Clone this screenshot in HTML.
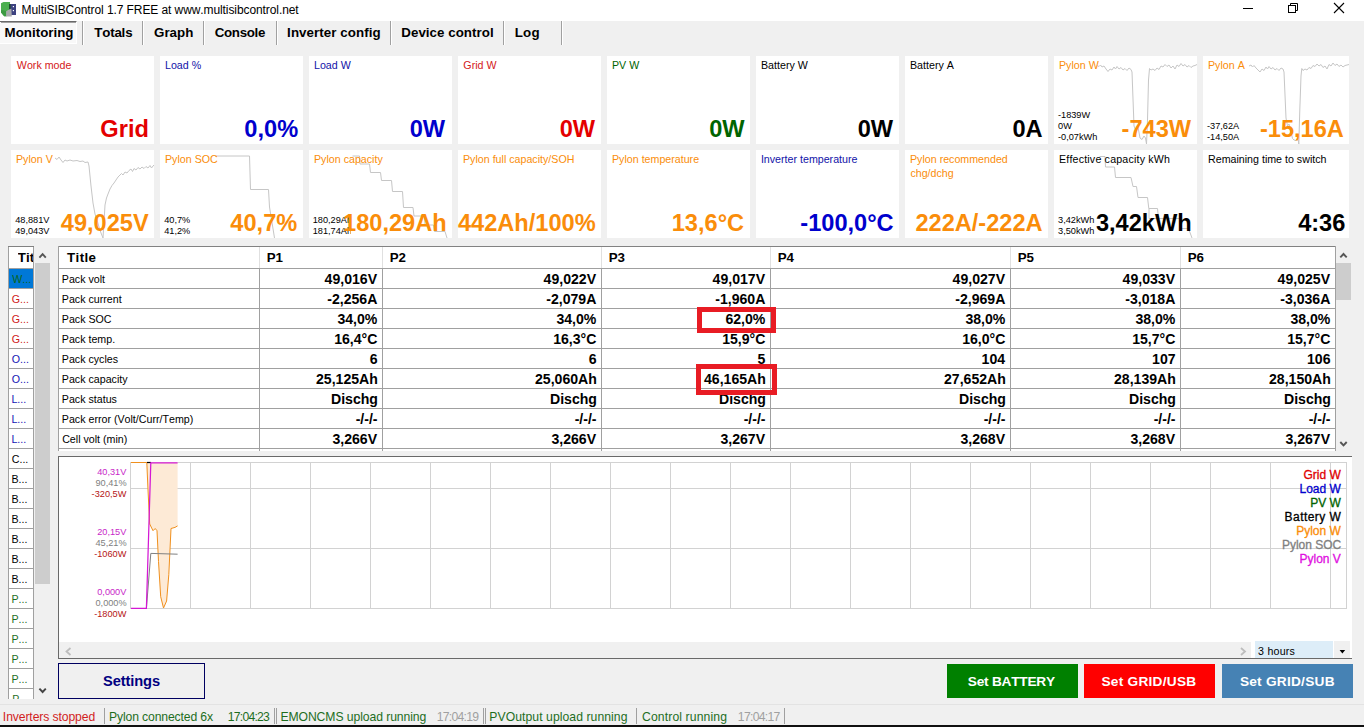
<!DOCTYPE html>
<html><head><meta charset="utf-8"><title>MultiSIBControl</title>
<style>
html,body{margin:0;padding:0;}
body{width:1364px;height:727px;overflow:hidden;background:#F0F0F0;position:relative;font-family:"Liberation Sans",sans-serif;}
.t{position:absolute;white-space:nowrap;line-height:30px;height:30px;font-kerning:none;}
.r{position:absolute;}
svg{position:absolute;left:0;top:0;overflow:visible;}
</style></head><body>
<div class="r" style="left:0px;top:0px;width:1364px;height:21px;background:#FFFFFF;"></div>
<svg width="22" height="21" viewBox="0 0 22 21">
<path d="M1 3.2 L3.5 2 L10 2 L10 9.5 L6.5 11.5 L6.5 16.2 L4.2 16.2 L1 12.6 Z" fill="#4CAF50"/>
<path d="M1 10 L6.5 11 L6.5 16.2 L4.2 16.2 L1 12.6 Z" fill="#3C9A42"/>
<rect x="9.3" y="4" width="6.7" height="11" fill="#3D4280"/>
<rect x="9" y="4" width="1.6" height="5" fill="#1F4D2A"/>
<path d="M6.2 16.6 L6.2 11.2 L11.4 8.6 L11.8 16.6 Z" fill="#A8A8AC"/>
<rect x="12.8" y="6" width="1.2" height="1.2" fill="#fff"/><rect x="12.8" y="10" width="1.2" height="1.2" fill="#fff"/>
</svg>
<div class="t" style="top:-5px;font-size:12px;color:#000;letter-spacing:-0.087px;left:21.62px;">MultiSIBControl 1.7 FREE at www.multisibcontrol.net</div>
<svg width="1364" height="21" viewBox="0 0 1364 21" shape-rendering="crispEdges">
<rect x="1243" y="8" width="10" height="1" fill="#000"/>
</svg>
<svg width="1364" height="21" viewBox="0 0 1364 21">
<rect x="1288.5" y="5.5" width="7" height="7" fill="none" stroke="#000" stroke-width="1"/>
<path d="M1290.5 5.5V3.5H1297.5V10.5H1295.5" fill="none" stroke="#000" stroke-width="1"/>
<path d="M1334 3L1344 13M1344 3L1334 13" fill="none" stroke="#000" stroke-width="1.1"/>
</svg>
<div class="r" style="left:0px;top:21px;width:77px;height:23px;background:#F8F8F8;border-top:1px solid #696969;border-right:1px solid #FFF;border-bottom:1px solid #FFF;box-sizing:border-box;"></div>
<div class="r" style="left:1px;top:22px;width:75px;height:1px;background:#A0A0A0;"></div>
<div class="t" style="top:18px;font-size:13.33px;color:#000;font-weight:bold;letter-spacing:0.004px;left:4.61px;">Monitoring</div>
<div class="t" style="top:18px;font-size:13.33px;color:#000;font-weight:bold;letter-spacing:-0.192px;left:94.25px;">Totals</div>
<div class="t" style="top:18px;font-size:13.33px;color:#000;font-weight:bold;letter-spacing:0.005px;left:154.05px;">Graph</div>
<div class="t" style="top:18px;font-size:13.33px;color:#000;font-weight:bold;letter-spacing:-0.297px;left:214.65px;">Console</div>
<div class="t" style="top:18px;font-size:13.33px;color:#000;font-weight:bold;letter-spacing:0.064px;left:287.11px;">Inverter config</div>
<div class="t" style="top:18px;font-size:13.33px;color:#000;font-weight:bold;letter-spacing:0.037px;left:401.31px;">Device control</div>
<div class="t" style="top:18px;font-size:13.33px;color:#000;font-weight:bold;letter-spacing:0.278px;left:514.71px;">Log</div>
<div class="r" style="left:82px;top:21px;width:1px;height:24px;background:#A0A0A0;"></div>
<div class="r" style="left:83px;top:21px;width:1px;height:24px;background:#FFFFFF;"></div>
<div class="r" style="left:142px;top:21px;width:1px;height:24px;background:#A0A0A0;"></div>
<div class="r" style="left:143px;top:21px;width:1px;height:24px;background:#FFFFFF;"></div>
<div class="r" style="left:203px;top:21px;width:1px;height:24px;background:#A0A0A0;"></div>
<div class="r" style="left:204px;top:21px;width:1px;height:24px;background:#FFFFFF;"></div>
<div class="r" style="left:276px;top:21px;width:1px;height:24px;background:#A0A0A0;"></div>
<div class="r" style="left:277px;top:21px;width:1px;height:24px;background:#FFFFFF;"></div>
<div class="r" style="left:390px;top:21px;width:1px;height:24px;background:#A0A0A0;"></div>
<div class="r" style="left:391px;top:21px;width:1px;height:24px;background:#FFFFFF;"></div>
<div class="r" style="left:503px;top:21px;width:1px;height:24px;background:#A0A0A0;"></div>
<div class="r" style="left:504px;top:21px;width:1px;height:24px;background:#FFFFFF;"></div>
<div class="r" style="left:561px;top:21px;width:1px;height:24px;background:#A0A0A0;"></div>
<div class="r" style="left:562px;top:21px;width:1px;height:24px;background:#FFFFFF;"></div>
<div class="r" style="left:11px;top:56px;width:143px;height:88px;background:#FFFFFF;"></div>
<div class="t" style="top:50px;font-size:10.67px;color:#D42020;left:16.85px;">Work mode</div>
<div class="t" style="top:114px;font-size:23.6px;color:#E40000;font-weight:bold;right:1215.14px;">Grid</div>
<div class="r" style="left:160px;top:56px;width:143px;height:88px;background:#FFFFFF;"></div>
<div class="t" style="top:50px;font-size:10.67px;color:#1212A8;left:165.02px;">Load %</div>
<div class="t" style="top:114px;font-size:23.6px;color:#0000CD;font-weight:bold;right:1065.88px;">0,0%</div>
<div class="r" style="left:309px;top:56px;width:143px;height:88px;background:#FFFFFF;"></div>
<div class="t" style="top:50px;font-size:10.67px;color:#1212A8;left:314.02px;">Load W</div>
<div class="t" style="top:114px;font-size:23.6px;color:#0000CD;font-weight:bold;right:918.98px;">0W</div>
<div class="r" style="left:458px;top:56px;width:143px;height:88px;background:#FFFFFF;"></div>
<div class="t" style="top:50px;font-size:10.67px;color:#D42020;left:463.36px;">Grid W</div>
<div class="t" style="top:114px;font-size:23.6px;color:#E40000;font-weight:bold;right:768.98px;">0W</div>
<div class="r" style="left:607px;top:56px;width:143px;height:88px;background:#FFFFFF;"></div>
<div class="t" style="top:50px;font-size:10.67px;color:#006400;left:612.02px;">PV W</div>
<div class="t" style="top:114px;font-size:23.6px;color:#006400;font-weight:bold;right:619.48px;">0W</div>
<div class="r" style="left:756px;top:56px;width:143px;height:88px;background:#FFFFFF;"></div>
<div class="t" style="top:50px;font-size:10.67px;color:#000000;left:761.02px;">Battery W</div>
<div class="t" style="top:114px;font-size:23.6px;color:#000000;font-weight:bold;right:470.98px;">0W</div>
<div class="r" style="left:905px;top:56px;width:143px;height:88px;background:#FFFFFF;"></div>
<div class="t" style="top:50px;font-size:10.67px;color:#000000;left:910.02px;">Battery A</div>
<div class="t" style="top:114px;font-size:23.6px;color:#000000;font-weight:bold;right:321.38px;">0A</div>
<div class="r" style="left:1054px;top:56px;width:143px;height:88px;background:#FFFFFF;"></div>
<div class="t" style="top:100px;font-size:9.2px;color:#000;left:1057.99px;">-1839W</div>
<div class="t" style="top:111px;font-size:9.2px;color:#000;left:1058.04px;">0W</div>
<div class="t" style="top:122px;font-size:9.2px;color:#000;left:1057.99px;">-0,07kWh</div>
<svg width="1364" height="727" viewBox="0 0 1364 727"><path d="M1097 65.5 L1099 66.5 L1100.5 65 L1102 67 L1104 66 L1106 69 L1108 71.5 L1110 69 L1112 70 L1114 67 L1115.5 69 L1117 66.5 L1119 69 L1121 67.5 L1123 70 L1125 68.5 L1127 70.5 L1129 68 L1131 69.5 L1132 72 L1134 126 L1136 131 L1138 127 L1140 138 L1142 139.5 L1144 136 L1145.5 138 L1146.5 144 L1147.5 120 L1148.5 80 L1149.5 68.5 L1151 70 L1153 69 L1155 70.5 L1157 68 L1159 69.5 L1161 66 L1163 67 L1165 64.5 L1167 66.5 L1169 65 L1171 68 L1173 66 L1175 69 L1177 65 L1179 66.5 L1181 63.5 L1183 66 L1185 64.5 L1187 67 L1189 65.5 L1191 67.5 L1193 66 L1195 65.5 L1197 64.5" fill="none" stroke="#C6C6C6" stroke-width="1"/></svg>
<div class="t" style="top:50px;font-size:10.67px;color:#FA8D0A;left:1059.02px;">Pylon W</div>
<div class="t" style="top:114px;font-size:23.6px;color:#FA8D0A;font-weight:bold;right:172.98px;">-743W</div>
<div class="r" style="left:1203px;top:56px;width:146px;height:88px;background:#FFFFFF;"></div>
<div class="t" style="top:111px;font-size:9.2px;color:#000;left:1206.99px;">-37,62A</div>
<div class="t" style="top:122px;font-size:9.2px;color:#000;left:1206.99px;">-14,50A</div>
<svg width="1364" height="727" viewBox="0 0 1364 727"><path d="M1249 66 L1251 65 L1252.5 67 L1254 65.5 L1256 68 L1258 70 L1260 72 L1262 69 L1264 70.5 L1266 67 L1267.5 69 L1269 66.5 L1271 69 L1273 67.5 L1275 70 L1277 68.5 L1279 70.5 L1281 68 L1283 69 L1284 72 L1286 118 L1287.5 126 L1289 124 L1291 132 L1292.5 138.5 L1294 140 L1296 140.5 L1298 138 L1298.8 144 L1299.8 110 L1301 76 L1301.8 68.5 L1303 70.5 L1305 69 L1307 70 L1309 67.5 L1311 68.5 L1313 65.5 L1315 66.5 L1317 64 L1319 66 L1321 64.5 L1323 67.5 L1325 66 L1327 69 L1329 64.5 L1331 66 L1333 63 L1335 65.5 L1337 64 L1339 66.5 L1341 65 L1343 67 L1345 65.5 L1347 65 L1349 64.5" fill="none" stroke="#C6C6C6" stroke-width="1"/></svg>
<div class="t" style="top:50px;font-size:10.67px;color:#FA8D0A;left:1208.02px;">Pylon A</div>
<div class="t" style="top:114px;font-size:23.6px;color:#FA8D0A;font-weight:bold;right:20.08px;">-15,16A</div>
<div class="r" style="left:11px;top:150px;width:143px;height:88px;background:#FFFFFF;"></div>
<div class="t" style="top:205px;font-size:9.2px;color:#000;left:15.19px;">48,881V</div>
<div class="t" style="top:216px;font-size:9.2px;color:#000;left:15.19px;">49,043V</div>
<svg width="1364" height="727" viewBox="0 0 1364 727"><path d="M55 158 L57 159.5 L59 157 L61 160 L63 162.5 L65 160 L67 161 L70 160 L73 161 L77 160.5 L80 161.5 L83 161 L85 162.5 L88 162 L89 166 L91 186 L93 203 L95 214 L97 220 L99 227 L101 233 L103 238 L104 222 L105 205 L106.5 198 L108 194 L110 189 L112 185.5 L114 183 L116 180 L118 177 L120 175 L121.5 173.5 L123 175 L125 172 L127 173 L129 170.5 L131 169 L132.5 171.5 L134 168.5 L136 170 L138 167.5 L140 169 L142 167 L144 168.5 L146 166.5 L148 168 L150 165.5 L151.5 168 L153 166 L154 165" fill="none" stroke="#C6C6C6" stroke-width="1"/></svg>
<div class="t" style="top:144px;font-size:10.67px;color:#FA8D0A;left:16.02px;">Pylon V</div>
<div class="t" style="top:208px;font-size:23.6px;color:#FA8D0A;font-weight:bold;right:1215.34px;">49,025V</div>
<div class="r" style="left:160px;top:150px;width:143px;height:88px;background:#FFFFFF;"></div>
<div class="t" style="top:205px;font-size:9.2px;color:#000;left:164.19px;">40,7%</div>
<div class="t" style="top:216px;font-size:9.2px;color:#000;left:164.19px;">41,2%</div>
<svg width="1364" height="727" viewBox="0 0 1364 727"><path d="M215.5 156 L249.5 156 L250.5 189.5 L268.5 189.5 L269.5 207 L274.5 238" fill="none" stroke="#C6C6C6" stroke-width="1"/></svg>
<div class="t" style="top:144px;font-size:10.67px;color:#FA8D0A;left:165.02px;">Pylon SOC</div>
<div class="t" style="top:208px;font-size:23.6px;color:#FA8D0A;font-weight:bold;right:1066.78px;">40,7%</div>
<div class="r" style="left:309px;top:150px;width:143px;height:88px;background:#FFFFFF;"></div>
<div class="t" style="top:205px;font-size:9.2px;color:#000;left:312.70px;">180,29Ah</div>
<div class="t" style="top:216px;font-size:9.2px;color:#000;left:312.70px;">181,74Ah</div>
<div class="r" style="left:350.5px;top:208px;width:101.5px;height:30px;background:#FFF;"></div>
<svg width="1364" height="727" viewBox="0 0 1364 727"><path d="M352.5 156 L359.5 156 L360 164 L369.5 164 L370.5 172.5 L380.5 172.5 L381.5 180.5 L391.5 180.5 L392.5 191.5 L402.5 191.5 L403.5 207.5 L413 207.5 L414 216 L424.5 216 L425 225 L433.5 225 L434.5 231.5 L445 231.5 L447 238" fill="none" stroke="#C6C6C6" stroke-width="1"/></svg>
<div class="t" style="top:144px;font-size:10.67px;color:#FA8D0A;left:314.02px;">Pylon capacity</div>
<div class="t" style="top:208px;font-size:23.6px;color:#FA8D0A;font-weight:bold;right:917.34px;">180,29Ah</div>
<div class="r" style="left:458px;top:150px;width:143px;height:88px;background:#FFFFFF;"></div>
<div class="t" style="top:144px;font-size:10.67px;color:#FA8D0A;left:463.02px;">Pylon full capacity/SOH</div>
<div class="t" style="top:208px;font-size:23.6px;color:#FA8D0A;font-weight:bold;right:768.38px;">442Ah/100%</div>
<div class="r" style="left:607px;top:150px;width:143px;height:88px;background:#FFFFFF;"></div>
<div class="t" style="top:144px;font-size:10.67px;color:#FA8D0A;left:612.02px;">Pylon temperature</div>
<div class="t" style="top:208px;font-size:23.6px;color:#FA8D0A;font-weight:bold;right:619.85px;">13,6°C</div>
<div class="r" style="left:756px;top:150px;width:143px;height:88px;background:#FFFFFF;"></div>
<div class="t" style="top:144px;font-size:10.67px;color:#1212A8;left:760.92px;">Inverter temperature</div>
<div class="t" style="top:208px;font-size:23.6px;color:#0000CD;font-weight:bold;right:470.35px;">-100,0°C</div>
<div class="r" style="left:905px;top:150px;width:143px;height:88px;background:#FFFFFF;"></div>
<div class="t" style="top:144px;font-size:10.67px;color:#FA8D0A;left:910.02px;">Pylon recommended</div>
<div class="t" style="top:158px;font-size:10.67px;color:#FA8D0A;left:910.45px;">chg/dchg</div>
<div class="t" style="top:208px;font-size:23.6px;color:#FA8D0A;font-weight:bold;right:321.38px;">222A/-222A</div>
<div class="r" style="left:1054px;top:150px;width:143px;height:88px;background:#FFFFFF;"></div>
<div class="t" style="top:205px;font-size:9.2px;color:#000;left:1058.05px;">3,42kWh</div>
<div class="t" style="top:216px;font-size:9.2px;color:#000;left:1058.05px;">3,50kWh</div>
<div class="r" style="left:1095px;top:208px;width:102px;height:30px;background:#FFF;"></div>
<svg width="1364" height="727" viewBox="0 0 1364 727"><path d="M1099.5 156.5 L1105 156.5 L1105.5 167 L1114.5 167 L1115.5 177.5 L1131 177.5 L1133 186.5 L1136.5 186.5 L1138 197.5 L1147.5 197.5 L1148.8 208.5 L1157.5 208.5 L1158.5 218.5 L1149 218.5 L1149 208.5 M1158.5 218.5 L1180.5 218.5 L1181 228.5 L1188.5 228.5 L1192 238" fill="none" stroke="#C6C6C6" stroke-width="1"/></svg>
<div class="t" style="top:144px;font-size:10.67px;color:#000000;letter-spacing:0.178px;left:1059.02px;">Effective capacity kWh</div>
<div class="t" style="top:208px;font-size:23.6px;color:#000000;font-weight:bold;right:172.34px;">3,42kWh</div>
<div class="r" style="left:1203px;top:150px;width:146px;height:88px;background:#FFFFFF;"></div>
<div class="t" style="top:144px;font-size:10.67px;color:#000000;left:1208.02px;">Remaining time to switch</div>
<div class="t" style="top:208px;font-size:23.6px;color:#000000;font-weight:bold;right:18.65px;">4:36</div>
<div class="r" style="left:8px;top:246px;width:26px;height:453px;background:#FFFFFF;border:1px solid #A0A0A0;border-bottom:none;box-sizing:border-box;"></div>
<div class="r" style="left:8px;top:246px;width:26px;height:1px;background:#828282;"></div>
<div class="t" style="top:243px;font-size:13.33px;color:#000;font-weight:bold;left:17.85px;width:14.8px;overflow:hidden;">Tit</div>
<div class="r" style="left:9px;top:268px;width:24px;height:1px;background:#A0A0A0;"></div>
<div class="r" style="left:9px;top:269px;width:24px;height:19px;background:#0078D7;"></div>
<div class="t" style="top:264px;font-size:10.67px;color:#0A6420;left:12.25px;">W...</div>
<div class="r" style="left:9px;top:288px;width:24px;height:1px;background:#A0A0A0;"></div>
<div class="t" style="top:284px;font-size:10.67px;color:#D02020;left:11.76px;">G...</div>
<div class="r" style="left:9px;top:308px;width:24px;height:1px;background:#A0A0A0;"></div>
<div class="t" style="top:304px;font-size:10.67px;color:#D02020;left:11.76px;">G...</div>
<div class="r" style="left:9px;top:328px;width:24px;height:1px;background:#A0A0A0;"></div>
<div class="t" style="top:324px;font-size:10.67px;color:#D02020;left:11.76px;">G...</div>
<div class="r" style="left:9px;top:348px;width:24px;height:1px;background:#A0A0A0;"></div>
<div class="t" style="top:344px;font-size:10.67px;color:#1414B4;left:11.79px;">O...</div>
<div class="r" style="left:9px;top:368px;width:24px;height:1px;background:#A0A0A0;"></div>
<div class="t" style="top:364px;font-size:10.67px;color:#1414B4;left:11.79px;">O...</div>
<div class="r" style="left:9px;top:388px;width:24px;height:1px;background:#A0A0A0;"></div>
<div class="t" style="top:384px;font-size:10.67px;color:#1414B4;left:11.42px;">L...</div>
<div class="r" style="left:9px;top:408px;width:24px;height:1px;background:#A0A0A0;"></div>
<div class="t" style="top:404px;font-size:10.67px;color:#1414B4;left:11.42px;">L...</div>
<div class="r" style="left:9px;top:428px;width:24px;height:1px;background:#A0A0A0;"></div>
<div class="t" style="top:424px;font-size:10.67px;color:#1414B4;left:11.42px;">L...</div>
<div class="r" style="left:9px;top:448px;width:24px;height:1px;background:#A0A0A0;"></div>
<div class="t" style="top:444px;font-size:10.67px;color:#000;left:11.76px;">C...</div>
<div class="r" style="left:9px;top:468px;width:24px;height:1px;background:#A0A0A0;"></div>
<div class="t" style="top:464px;font-size:10.67px;color:#000;left:11.42px;">B...</div>
<div class="r" style="left:9px;top:488px;width:24px;height:1px;background:#A0A0A0;"></div>
<div class="t" style="top:484px;font-size:10.67px;color:#000;left:11.42px;">B...</div>
<div class="r" style="left:9px;top:508px;width:24px;height:1px;background:#A0A0A0;"></div>
<div class="t" style="top:504px;font-size:10.67px;color:#000;left:11.42px;">B...</div>
<div class="r" style="left:9px;top:528px;width:24px;height:1px;background:#A0A0A0;"></div>
<div class="t" style="top:524px;font-size:10.67px;color:#000;left:11.42px;">B...</div>
<div class="r" style="left:9px;top:548px;width:24px;height:1px;background:#A0A0A0;"></div>
<div class="t" style="top:544px;font-size:10.67px;color:#000;left:11.42px;">B...</div>
<div class="r" style="left:9px;top:568px;width:24px;height:1px;background:#A0A0A0;"></div>
<div class="t" style="top:564px;font-size:10.67px;color:#000;left:11.42px;">B...</div>
<div class="r" style="left:9px;top:588px;width:24px;height:1px;background:#A0A0A0;"></div>
<div class="t" style="top:584px;font-size:10.67px;color:#1E6E1E;left:11.42px;">P...</div>
<div class="r" style="left:9px;top:608px;width:24px;height:1px;background:#A0A0A0;"></div>
<div class="t" style="top:604px;font-size:10.67px;color:#1E6E1E;left:11.42px;">P...</div>
<div class="r" style="left:9px;top:628px;width:24px;height:1px;background:#A0A0A0;"></div>
<div class="t" style="top:624px;font-size:10.67px;color:#1E6E1E;left:11.42px;">P...</div>
<div class="r" style="left:9px;top:648px;width:24px;height:1px;background:#A0A0A0;"></div>
<div class="t" style="top:644px;font-size:10.67px;color:#1E6E1E;left:11.42px;">P...</div>
<div class="r" style="left:9px;top:668px;width:24px;height:1px;background:#A0A0A0;"></div>
<div class="t" style="top:664px;font-size:10.67px;color:#1E6E1E;left:11.42px;">P...</div>
<div class="r" style="left:9px;top:688px;width:24px;height:1px;background:#A0A0A0;"></div>
<div class="r" style="left:9px;top:689px;width:24px;height:10px;overflow:hidden;"><div class="t" style="left:3.3px;top:-5px;font-size:10.67px;color:#1E6E1E">P...</div></div>
<div class="r" style="left:34px;top:246px;width:17px;height:453px;background:#F0F0F0;"></div>
<div class="r" style="left:35px;top:263px;width:15px;height:321px;background:#CDCDCD;"></div>
<svg width="1364" height="727" viewBox="0 0 1364 727"><path d="M39.4 257.6 L42.6 254.2 L45.8 257.6" fill="none" stroke="#555" stroke-width="1.9"/><path d="M39.4 688.6 L42.6 692 L45.8 688.6" fill="none" stroke="#444" stroke-width="1.9"/></svg>
<div class="r" style="left:58px;top:246px;width:1278px;height:205px;background:#FFFFFF;"></div>
<div class="r" style="left:58px;top:246px;width:1278px;height:1px;background:#828282;"></div>
<div class="r" style="left:58px;top:246px;width:1px;height:205px;background:#A0A0A0;"></div>
<div class="r" style="left:1335px;top:246px;width:1px;height:205px;background:#A0A0A0;"></div>
<div class="r" style="left:259px;top:247px;width:1px;height:21px;background:#E0E0E0;"></div>
<div class="r" style="left:259px;top:268px;width:1px;height:183px;background:#A0A0A0;"></div>
<div class="r" style="left:382px;top:247px;width:1px;height:21px;background:#E0E0E0;"></div>
<div class="r" style="left:382px;top:268px;width:1px;height:183px;background:#A0A0A0;"></div>
<div class="r" style="left:601px;top:247px;width:1px;height:21px;background:#E0E0E0;"></div>
<div class="r" style="left:601px;top:268px;width:1px;height:183px;background:#A0A0A0;"></div>
<div class="r" style="left:770px;top:247px;width:1px;height:21px;background:#E0E0E0;"></div>
<div class="r" style="left:770px;top:268px;width:1px;height:183px;background:#A0A0A0;"></div>
<div class="r" style="left:1010px;top:247px;width:1px;height:21px;background:#E0E0E0;"></div>
<div class="r" style="left:1010px;top:268px;width:1px;height:183px;background:#A0A0A0;"></div>
<div class="r" style="left:1180px;top:247px;width:1px;height:21px;background:#E0E0E0;"></div>
<div class="r" style="left:1180px;top:268px;width:1px;height:183px;background:#A0A0A0;"></div>
<div class="r" style="left:58px;top:268px;width:1278px;height:1px;background:#A0A0A0;"></div>
<div class="r" style="left:58px;top:288px;width:1278px;height:1px;background:#A0A0A0;"></div>
<div class="r" style="left:58px;top:308px;width:1278px;height:1px;background:#A0A0A0;"></div>
<div class="r" style="left:58px;top:328px;width:1278px;height:1px;background:#A0A0A0;"></div>
<div class="r" style="left:58px;top:348px;width:1278px;height:1px;background:#A0A0A0;"></div>
<div class="r" style="left:58px;top:368px;width:1278px;height:1px;background:#A0A0A0;"></div>
<div class="r" style="left:58px;top:388px;width:1278px;height:1px;background:#A0A0A0;"></div>
<div class="r" style="left:58px;top:408px;width:1278px;height:1px;background:#A0A0A0;"></div>
<div class="r" style="left:58px;top:428px;width:1278px;height:1px;background:#A0A0A0;"></div>
<div class="r" style="left:58px;top:448px;width:1278px;height:1px;background:#A0A0A0;"></div>
<div class="t" style="top:243px;font-size:13.33px;color:#000;font-weight:bold;letter-spacing:0.376px;left:67.05px;">Title</div>
<div class="t" style="top:243px;font-size:13.33px;color:#000;font-weight:bold;left:266.71px;">P1</div>
<div class="t" style="top:243px;font-size:13.33px;color:#000;font-weight:bold;left:389.71px;">P2</div>
<div class="t" style="top:243px;font-size:13.33px;color:#000;font-weight:bold;left:608.71px;">P3</div>
<div class="t" style="top:243px;font-size:13.33px;color:#000;font-weight:bold;left:777.71px;">P4</div>
<div class="t" style="top:243px;font-size:13.33px;color:#000;font-weight:bold;left:1017.71px;">P5</div>
<div class="t" style="top:243px;font-size:13.33px;color:#000;font-weight:bold;left:1187.71px;">P6</div>
<div class="t" style="top:264px;font-size:10.67px;color:#000;left:61.82px;">Pack volt</div>
<div class="t" style="top:264px;font-size:14.1px;color:#000;font-weight:bold;right:986.90px;">49,016V</div>
<div class="t" style="top:264px;font-size:14.1px;color:#000;font-weight:bold;right:767.90px;">49,022V</div>
<div class="t" style="top:264px;font-size:14.1px;color:#000;font-weight:bold;right:598.90px;">49,017V</div>
<div class="t" style="top:264px;font-size:14.1px;color:#000;font-weight:bold;right:358.90px;">49,027V</div>
<div class="t" style="top:264px;font-size:14.1px;color:#000;font-weight:bold;right:188.90px;">49,033V</div>
<div class="t" style="top:264px;font-size:14.1px;color:#000;font-weight:bold;right:33.90px;">49,025V</div>
<div class="t" style="top:284px;font-size:10.67px;color:#000;left:61.82px;">Pack current</div>
<div class="t" style="top:284px;font-size:14.1px;color:#000;font-weight:bold;right:986.63px;">-2,256A</div>
<div class="t" style="top:284px;font-size:14.1px;color:#000;font-weight:bold;right:767.63px;">-2,079A</div>
<div class="t" style="top:284px;font-size:14.1px;color:#000;font-weight:bold;right:598.63px;">-1,960A</div>
<div class="t" style="top:284px;font-size:14.1px;color:#000;font-weight:bold;right:358.63px;">-2,969A</div>
<div class="t" style="top:284px;font-size:14.1px;color:#000;font-weight:bold;right:188.63px;">-3,018A</div>
<div class="t" style="top:284px;font-size:14.1px;color:#000;font-weight:bold;right:33.63px;">-3,036A</div>
<div class="t" style="top:304px;font-size:10.67px;color:#000;left:61.82px;">Pack SOC</div>
<div class="t" style="top:304px;font-size:14.1px;color:#000;font-weight:bold;right:986.63px;">34,0%</div>
<div class="t" style="top:304px;font-size:14.1px;color:#000;font-weight:bold;right:767.63px;">34,0%</div>
<div class="t" style="top:304px;font-size:14.1px;color:#000;font-weight:bold;right:598.63px;">62,0%</div>
<div class="t" style="top:304px;font-size:14.1px;color:#000;font-weight:bold;right:358.63px;">38,0%</div>
<div class="t" style="top:304px;font-size:14.1px;color:#000;font-weight:bold;right:188.63px;">38,0%</div>
<div class="t" style="top:304px;font-size:14.1px;color:#000;font-weight:bold;right:33.63px;">38,0%</div>
<div class="t" style="top:324px;font-size:10.67px;color:#000;left:61.82px;">Pack temp.</div>
<div class="t" style="top:324px;font-size:14.1px;color:#000;font-weight:bold;right:986.61px;">16,4°C</div>
<div class="t" style="top:324px;font-size:14.1px;color:#000;font-weight:bold;right:767.61px;">16,3°C</div>
<div class="t" style="top:324px;font-size:14.1px;color:#000;font-weight:bold;right:598.61px;">15,9°C</div>
<div class="t" style="top:324px;font-size:14.1px;color:#000;font-weight:bold;right:358.61px;">16,0°C</div>
<div class="t" style="top:324px;font-size:14.1px;color:#000;font-weight:bold;right:188.61px;">15,7°C</div>
<div class="t" style="top:324px;font-size:14.1px;color:#000;font-weight:bold;right:33.61px;">15,7°C</div>
<div class="t" style="top:344px;font-size:10.67px;color:#000;left:61.82px;">Pack cycles</div>
<div class="t" style="top:344px;font-size:14.1px;color:#000;font-weight:bold;right:986.49px;">6</div>
<div class="t" style="top:344px;font-size:14.1px;color:#000;font-weight:bold;right:767.49px;">6</div>
<div class="t" style="top:344px;font-size:14.1px;color:#000;font-weight:bold;right:598.61px;">5</div>
<div class="t" style="top:344px;font-size:14.1px;color:#000;font-weight:bold;right:358.92px;">104</div>
<div class="t" style="top:344px;font-size:14.1px;color:#000;font-weight:bold;right:188.38px;">107</div>
<div class="t" style="top:344px;font-size:14.1px;color:#000;font-weight:bold;right:33.49px;">106</div>
<div class="t" style="top:364px;font-size:10.67px;color:#000;left:61.82px;">Pack capacity</div>
<div class="t" style="top:364px;font-size:14.1px;color:#000;font-weight:bold;right:986.13px;">25,125Ah</div>
<div class="t" style="top:364px;font-size:14.1px;color:#000;font-weight:bold;right:767.13px;">25,060Ah</div>
<div class="t" style="top:364px;font-size:14.1px;color:#000;font-weight:bold;right:598.13px;">46,165Ah</div>
<div class="t" style="top:364px;font-size:14.1px;color:#000;font-weight:bold;right:358.13px;">27,652Ah</div>
<div class="t" style="top:364px;font-size:14.1px;color:#000;font-weight:bold;right:188.13px;">28,139Ah</div>
<div class="t" style="top:364px;font-size:14.1px;color:#000;font-weight:bold;right:33.13px;">28,150Ah</div>
<div class="t" style="top:384px;font-size:10.67px;color:#000;left:61.82px;">Pack status</div>
<div class="t" style="top:384px;font-size:14.1px;color:#000;font-weight:bold;right:986.06px;">Dischg</div>
<div class="t" style="top:384px;font-size:14.1px;color:#000;font-weight:bold;right:767.06px;">Dischg</div>
<div class="t" style="top:384px;font-size:14.1px;color:#000;font-weight:bold;right:598.06px;">Dischg</div>
<div class="t" style="top:384px;font-size:14.1px;color:#000;font-weight:bold;right:358.06px;">Dischg</div>
<div class="t" style="top:384px;font-size:14.1px;color:#000;font-weight:bold;right:188.06px;">Dischg</div>
<div class="t" style="top:384px;font-size:14.1px;color:#000;font-weight:bold;right:33.06px;">Dischg</div>
<div class="t" style="top:404px;font-size:10.67px;color:#000;left:61.82px;">Pack error (Volt/Curr/Temp)</div>
<div class="t" style="top:404px;font-size:14.1px;color:#000;font-weight:bold;right:986.44px;">-/-/-</div>
<div class="t" style="top:404px;font-size:14.1px;color:#000;font-weight:bold;right:767.44px;">-/-/-</div>
<div class="t" style="top:404px;font-size:14.1px;color:#000;font-weight:bold;right:598.44px;">-/-/-</div>
<div class="t" style="top:404px;font-size:14.1px;color:#000;font-weight:bold;right:358.44px;">-/-/-</div>
<div class="t" style="top:404px;font-size:14.1px;color:#000;font-weight:bold;right:188.44px;">-/-/-</div>
<div class="t" style="top:404px;font-size:14.1px;color:#000;font-weight:bold;right:33.44px;">-/-/-</div>
<div class="t" style="top:424px;font-size:10.67px;color:#000;left:62.16px;">Cell volt (min)</div>
<div class="t" style="top:424px;font-size:14.1px;color:#000;font-weight:bold;right:986.90px;">3,266V</div>
<div class="t" style="top:424px;font-size:14.1px;color:#000;font-weight:bold;right:767.90px;">3,266V</div>
<div class="t" style="top:424px;font-size:14.1px;color:#000;font-weight:bold;right:598.90px;">3,267V</div>
<div class="t" style="top:424px;font-size:14.1px;color:#000;font-weight:bold;right:358.90px;">3,268V</div>
<div class="t" style="top:424px;font-size:14.1px;color:#000;font-weight:bold;right:188.90px;">3,268V</div>
<div class="t" style="top:424px;font-size:14.1px;color:#000;font-weight:bold;right:33.90px;">3,267V</div>
<div class="r" style="left:697px;top:307px;width:79px;height:26px;border:5px solid #E81C24;box-sizing:border-box;"></div>
<div class="r" style="left:696px;top:364px;width:81px;height:31px;border:5px solid #E81C24;box-sizing:border-box;"></div>
<div class="r" style="left:1336px;top:246px;width:17px;height:205px;background:#F0F0F0;"></div>
<div class="r" style="left:1336px;top:263px;width:15px;height:37px;background:#CDCDCD;"></div>
<svg width="1364" height="727" viewBox="0 0 1364 727"><path d="M1340.3 257.4 L1343.5 254 L1346.7 257.4" fill="none" stroke="#555" stroke-width="1.9"/><path d="M1340.3 442 L1343.5 445.4 L1346.7 442" fill="none" stroke="#555" stroke-width="1.9"/></svg>
<div class="r" style="left:58px;top:456px;width:1294px;height:203px;background:#FFFFFF;border-top:1px solid #696969;border-left:1px solid #696969;border-bottom:1px solid #696969;box-sizing:border-box;"></div>
<div class="r" style="left:130px;top:462px;width:1px;height:147px;background:#D2D2D2;"></div>
<div class="r" style="left:190px;top:462px;width:1px;height:147px;background:#D2D2D2;"></div>
<div class="r" style="left:250px;top:462px;width:1px;height:147px;background:#D2D2D2;"></div>
<div class="r" style="left:310px;top:462px;width:1px;height:147px;background:#D2D2D2;"></div>
<div class="r" style="left:370px;top:462px;width:1px;height:147px;background:#D2D2D2;"></div>
<div class="r" style="left:430px;top:462px;width:1px;height:147px;background:#D2D2D2;"></div>
<div class="r" style="left:490px;top:462px;width:1px;height:147px;background:#D2D2D2;"></div>
<div class="r" style="left:550px;top:462px;width:1px;height:147px;background:#D2D2D2;"></div>
<div class="r" style="left:610px;top:462px;width:1px;height:147px;background:#D2D2D2;"></div>
<div class="r" style="left:670px;top:462px;width:1px;height:147px;background:#D2D2D2;"></div>
<div class="r" style="left:730px;top:462px;width:1px;height:147px;background:#D2D2D2;"></div>
<div class="r" style="left:790px;top:462px;width:1px;height:147px;background:#D2D2D2;"></div>
<div class="r" style="left:850px;top:462px;width:1px;height:147px;background:#D2D2D2;"></div>
<div class="r" style="left:910px;top:462px;width:1px;height:147px;background:#D2D2D2;"></div>
<div class="r" style="left:970px;top:462px;width:1px;height:147px;background:#D2D2D2;"></div>
<div class="r" style="left:1030px;top:462px;width:1px;height:147px;background:#D2D2D2;"></div>
<div class="r" style="left:1090px;top:462px;width:1px;height:147px;background:#D2D2D2;"></div>
<div class="r" style="left:1150px;top:462px;width:1px;height:147px;background:#D2D2D2;"></div>
<div class="r" style="left:1210px;top:462px;width:1px;height:147px;background:#D2D2D2;"></div>
<div class="r" style="left:1270px;top:462px;width:1px;height:147px;background:#D2D2D2;"></div>
<div class="r" style="left:1330px;top:462px;width:1px;height:147px;background:#D2D2D2;"></div>
<div class="r" style="left:1346px;top:462px;width:1px;height:147px;background:#D2D2D2;"></div>
<div class="r" style="left:130px;top:462px;width:1217px;height:1px;background:#D2D2D2;"></div>
<div class="r" style="left:130px;top:488px;width:1217px;height:1px;background:#D2D2D2;"></div>
<div class="r" style="left:130px;top:548px;width:1217px;height:1px;background:#D2D2D2;"></div>
<div class="r" style="left:130px;top:608px;width:1217px;height:1px;background:#D2D2D2;"></div>
<svg width="1364" height="727" viewBox="0 0 1364 727">
<path d="M131 462.5 L146.8 462.5 L148 490 L149.7 524 L153 530.7 L155.2 528.5 L157 530.7 L158.5 561.5 L160.7 596.7 L163.5 608 L166.6 601 L168.8 574.7 L171 528.5 L175 527.4 L177.6 525.9 L177.6 462.5 Z" fill="#FDEAD6" stroke="none"/>
<path d="M131 462.5 L146.8 462.5 L148 490 L149.7 524 L153 530.7 L155.2 528.5 L157 530.7 L158.5 561.5 L160.7 596.7 L163.5 608 L166.6 601 L168.8 574.7 L171 528.5 L175 527.4 L177.6 525.9" fill="none" stroke="#F0901E" stroke-width="1"/>
<path d="M131 608.5 L146.4 608.5 L150.8 553.4 L177.6 554.2" fill="none" stroke="#808080" stroke-width="1"/>
<path d="M147 462.5 L151 462.5" fill="none" stroke="#000" stroke-width="1.2"/>
<path d="M131 608.3 L146.4 608.3 L150.8 462.8 L177.6 462.8" fill="none" stroke="#D418D4" stroke-width="1.25"/>
</svg>
<div class="t" style="top:457px;font-size:9.2px;color:#C828C8;right:1237.66px;">40,31V</div>
<div class="t" style="top:468px;font-size:9.2px;color:#808080;right:1237.37px;">90,41%</div>
<div class="t" style="top:479px;font-size:9.2px;color:#B41414;right:1237.67px;">-320,5W</div>
<div class="t" style="top:517px;font-size:9.2px;color:#C828C8;right:1237.66px;">20,15V</div>
<div class="t" style="top:528px;font-size:9.2px;color:#808080;right:1237.37px;">45,21%</div>
<div class="t" style="top:539px;font-size:9.2px;color:#B41414;right:1237.67px;">-1060W</div>
<div class="t" style="top:577px;font-size:9.2px;color:#C828C8;right:1237.66px;">0,000V</div>
<div class="t" style="top:588px;font-size:9.2px;color:#808080;right:1237.37px;">0,000%</div>
<div class="t" style="top:599px;font-size:9.2px;color:#B41414;right:1237.67px;">-1800W</div>
<div class="t" style="top:460px;font-size:12px;color:#E00000;right:23.16px;-webkit-text-stroke:0.3px #E00000;">Grid W</div>
<div class="t" style="top:474px;font-size:12px;color:#0000CD;right:23.16px;-webkit-text-stroke:0.3px #0000CD;">Load W</div>
<div class="t" style="top:488px;font-size:12px;color:#006400;right:23.16px;-webkit-text-stroke:0.3px #006400;">PV W</div>
<div class="t" style="top:502px;font-size:12px;color:#000;letter-spacing:0.444px;right:22.72px;-webkit-text-stroke:0.3px #000;">Battery W</div>
<div class="t" style="top:516px;font-size:12px;color:#FA8D0A;right:23.16px;-webkit-text-stroke:0.3px #FA8D0A;">Pylon W</div>
<div class="t" style="top:530px;font-size:12px;color:#808080;right:22.74px;-webkit-text-stroke:0.3px #808080;">Pylon SOC</div>
<div class="t" style="top:544px;font-size:12px;color:#E010E0;right:23.15px;-webkit-text-stroke:0.3px #E010E0;">Pylon V</div>
<div class="r" style="left:59px;top:642px;width:1192px;height:16px;background:#F0F0F0;"></div>
<div class="r" style="left:1255px;top:641px;width:78px;height:17px;background:#DDEDF8;"></div>
<div class="r" style="left:1334px;top:641px;width:16px;height:17px;background:#F0F0F0;"></div>
<svg width="1364" height="727" viewBox="0 0 1364 727"><path d="M70.5 648 L66.5 651.5 L70.5 655" fill="none" stroke="#BDBDBD" stroke-width="1.8"/><path d="M1241 648 L1245 651.5 L1241 655" fill="none" stroke="#BDBDBD" stroke-width="1.8"/><path d="M1339.6 650 h5.6 l-2.8 3.6 z" fill="#000"/></svg>
<div class="t" style="top:636px;font-size:10.67px;color:#000;letter-spacing:0.217px;left:1258.09px;">3 hours</div>
<div class="r" style="left:58px;top:663px;width:147px;height:36px;border:1px solid #000060;box-sizing:border-box;"></div>
<div class="t" style="top:666px;font-size:14.67px;color:#000080;font-weight:bold;letter-spacing:-0.121px;left:103.08px;">Settings</div>
<div class="r" style="left:947px;top:664px;width:131px;height:34px;background:#008000;"></div>
<div class="t" style="top:667px;font-size:13.7px;color:#fff;font-weight:bold;letter-spacing:-0.240px;left:967.81px;">Set BATTERY</div>
<div class="r" style="left:1084px;top:664px;width:131px;height:34px;background:#FF0000;"></div>
<div class="t" style="top:667px;font-size:13.7px;color:#fff;font-weight:bold;letter-spacing:0.237px;left:1101.51px;">Set GRID/USB</div>
<div class="r" style="left:1222px;top:664px;width:131px;height:34px;background:#4682B4;"></div>
<div class="t" style="top:667px;font-size:13.7px;color:#fff;font-weight:bold;letter-spacing:0.237px;left:1239.91px;">Set GRID/SUB</div>
<div class="r" style="left:0px;top:704px;width:1364px;height:1px;background:#E3E3E3;"></div>
<div class="r" style="left:0px;top:725px;width:1364px;height:2px;background:#101010;"></div>
<div class="t" style="top:702px;font-size:12.2px;color:#D21E1E;letter-spacing:-0.116px;left:2.87px;">Inverters stopped</div>
<div class="t" style="top:702px;font-size:12.2px;color:#1E6E1E;letter-spacing:-0.138px;left:109.00px;">Pylon connected 6x</div>
<div class="t" style="top:702px;font-size:12.2px;color:#1E6E1E;letter-spacing:-0.761px;left:227.77px;">17:04:23</div>
<div class="t" style="top:702px;font-size:12.2px;color:#1E6E1E;letter-spacing:-0.083px;left:280.40px;">EMONCMS upload running</div>
<div class="t" style="top:702px;font-size:12.2px;color:#A0A0A0;letter-spacing:-0.726px;left:436.67px;">17:04:19</div>
<div class="t" style="top:702px;font-size:12.2px;color:#1E6E1E;letter-spacing:0.058px;left:489.30px;">PVOutput upload running</div>
<div class="t" style="top:702px;font-size:12.2px;color:#1E6E1E;letter-spacing:0.121px;left:641.98px;">Control running</div>
<div class="t" style="top:702px;font-size:12.2px;color:#A0A0A0;letter-spacing:-0.707px;left:737.87px;">17:04:17</div>
<div class="r" style="left:104px;top:708px;width:1px;height:16px;background:#A0A0A0;"></div>
<div class="r" style="left:274px;top:708px;width:1px;height:16px;background:#A0A0A0;"></div>
<div class="r" style="left:276px;top:708px;width:1px;height:16px;background:#A0A0A0;"></div>
<div class="r" style="left:483px;top:708px;width:1px;height:16px;background:#A0A0A0;"></div>
<div class="r" style="left:485px;top:708px;width:1px;height:16px;background:#A0A0A0;"></div>
<div class="r" style="left:636px;top:708px;width:1px;height:16px;background:#A0A0A0;"></div>
<div class="r" style="left:784px;top:708px;width:1px;height:16px;background:#A0A0A0;"></div>
</body></html>
